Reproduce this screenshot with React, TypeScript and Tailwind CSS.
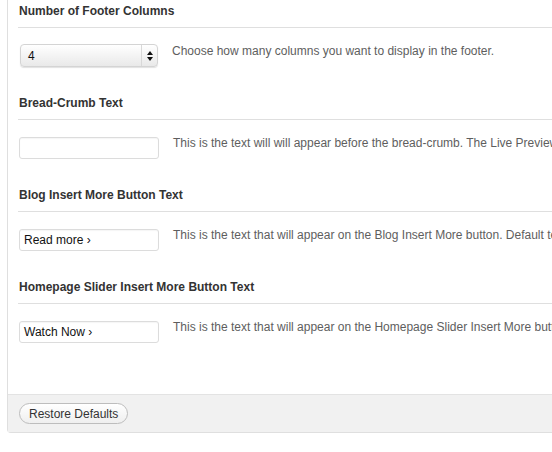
const sections = [
    {
        title: 'Number of Footer Columns',
        kind: 'select',
        value: '4',
        help: 'Choose how many columns you want to display in the footer.',
    },
    {
        title: 'Bread-Crumb Text',
        kind: 'text',
        value: '',
        help: 'This is the text will will appear before the bread-crumb. The Live Preview shows how it will look on your site.',
    },
    {
        title: 'Blog Insert More Button Text',
        kind: 'text',
        value: 'Read more ›',
        help: 'This is the text that will appear on the Blog Insert More button. Default text is Read more.',
    },
    {
        title: 'Homepage Slider Insert More Button Text',
        kind: 'text',
        value: 'Watch Now ›',
        help: 'This is the text that will appear on the Homepage Slider Insert More button. Default text is Watch Now.',
    },
];

function SelectBox({ value }: { value: string }) {
    return (
        <div className="relative flex h-[23px] w-[138px] shrink-0 -mt-[1px] ml-[1px] items-center rounded-[4px] border border-[#d4d4d4] bg-gradient-to-b from-white to-[#e9e9e9] shadow-[0_1px_1px_rgba(0,0,0,0.12)]">
            <span className="flex-1 pl-[7px] text-[12px] text-[#111]">{value}</span>
            <div className="flex h-full w-[16px] flex-col items-center justify-center gap-[2px] border-l border-[#d8d8d8]">
                <svg width="6" height="4" viewBox="0 0 6 4">
                    <path d="M3 0L6 4H0z" fill="#111" />
                </svg>
                <svg width="6" height="4" viewBox="0 0 6 4">
                    <path d="M0 0H6L3 4z" fill="#111" />
                </svg>
            </div>
        </div>
    );
}

export default function App() {
    return (
        <div
            className="w-[552px] h-[452px] overflow-hidden bg-white"
            style={{ fontFamily: '"Liberation Sans", Arial, sans-serif' }}
        >
            <div className="ml-[7px] w-[700px] border-l border-b border-[#dfdfdf] rounded-bl-[4px]">
                {sections.map(s => (
                    <div key={s.title} className="h-[92px] pt-[3px] pl-[10px]">
                        <h3 className="border-b border-[#dfdfdf] pb-2 pl-[1px] text-[12px] leading-4 font-bold text-[#333]">
                            {s.title}
                        </h3>
                        <div className="flex items-start pt-[17px] pl-[1px]">
                            {s.kind === 'select' ? (
                                <SelectBox value={s.value} />
                            ) : (
                                <div className="flex h-[22px] w-[140px] shrink-0 items-center rounded-[3px] border border-[#dcdcdc] bg-white pl-[4px] text-[12px] text-[#111] shadow-[inset_0_1px_1px_rgba(0,0,0,0.04)]">
                                    {s.value}
                                </div>
                            )}
                            <p className="ml-[14px] -mt-[2px] whitespace-nowrap text-[12px] leading-4 text-[#5e5e5e]">
                                {s.help}
                            </p>
                        </div>
                    </div>
                ))}
                <div className="mt-[26px] flex h-[38px] items-center border-t border-[#e3e3e3] bg-[#f1f1f1] pl-[11px]">
                    <button className="h-[21px] rounded-full border border-[#bdbdbd] bg-gradient-to-b from-white to-[#efefef] px-[9px] text-[12px] leading-4 text-[#333]">
                        Restore Defaults
                    </button>
                </div>
            </div>
        </div>
    );
}
